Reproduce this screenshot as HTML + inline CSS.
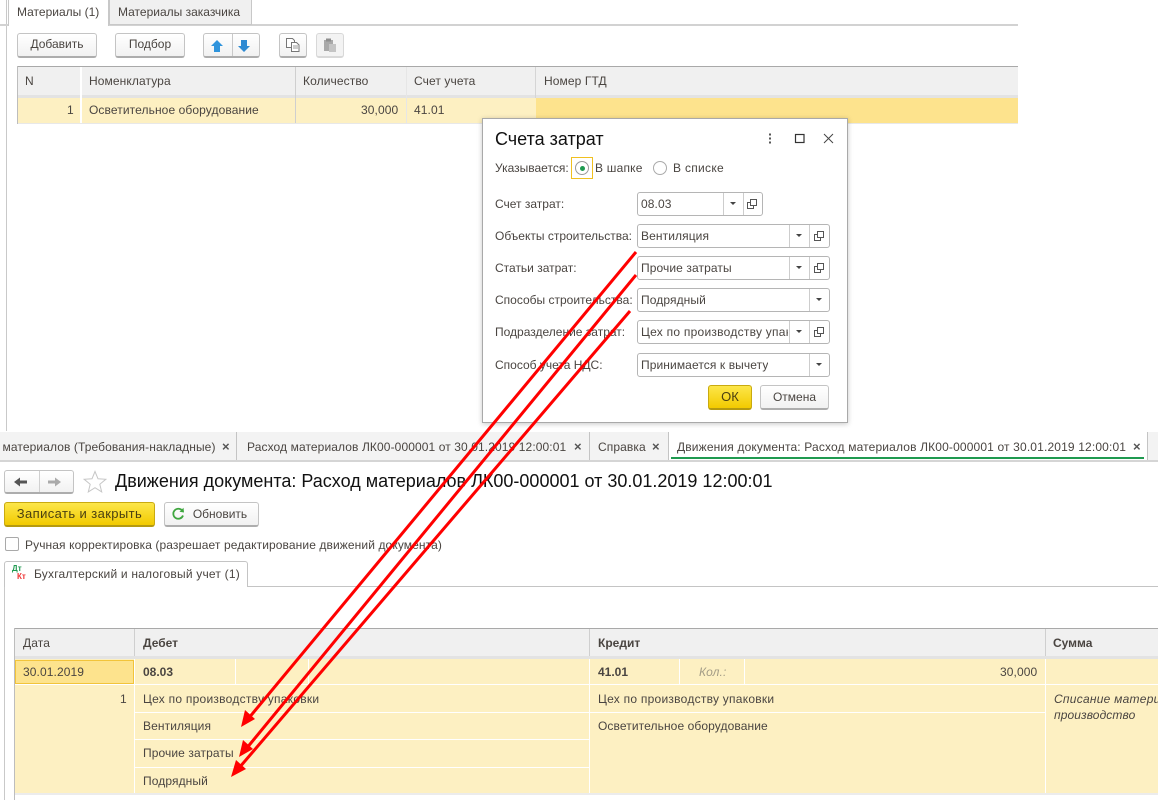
<!DOCTYPE html>
<html lang="ru"><head><meta charset="utf-8"><title>Счета затрат</title>
<style>
html,body{margin:0;padding:0;background:#fff}
#p{position:relative;width:1164px;height:800px;overflow:hidden;background:#fff;font:12px "Liberation Sans","Noto Sans CJK SC",sans-serif;color:#4a4541;filter:blur(.3px)}
#p div,#p span{position:absolute;box-sizing:border-box}
.t{white-space:nowrap;line-height:14px;letter-spacing:.1px}
.l{letter-spacing:0}
.w{letter-spacing:.25px}
.x{font-weight:bold;color:#555;font-size:13px}
.r{background:#fdf0c2}
.h{background:#f0f0f0}
.btn{background:linear-gradient(#fff,#f1f1f1);border:1px solid #c4c4c4;border-bottom:2px solid #adadad;border-radius:3px;text-align:center;line-height:20px;white-space:nowrap}
.y{background:linear-gradient(#fce64a,#f2ca00);border:1px solid #c9aa10;border-bottom:2px solid #b59a10;border-radius:3px;text-align:center;white-space:nowrap;color:#4a3f10}
.f{background:#fff;border:1px solid #b5b5b5;border-radius:3px;height:24px}
.v{left:3px;top:4px;line-height:14px;white-space:nowrap;overflow:hidden;letter-spacing:.1px}
.sep{top:0;bottom:0;width:1px;background:#cdcdcd}
.tri{width:0;height:0;border-left:3px solid transparent;border-right:3px solid transparent;border-top:3px solid #444}
</style></head><body><div id="p">

<!-- left edge frames -->
<div style="left:6px;top:0;width:1px;height:431px;background:#c9c9c9"></div>

<!-- top tabs -->
<div style="left:0;top:24px;width:1018px;height:2px;background:#d2d2d2"></div>
<div style="left:8px;top:-2px;width:101px;height:28px;background:#fff;border:1px solid #c8c8c8;border-top:0;border-bottom:0"></div>
<div style="left:109px;top:-2px;width:143px;height:27px;background:#f0f0f0;border:1px solid #c8c8c8"></div>
<span class="t l" style="left:17px;top:5px">Материалы (1)</span>
<span class="t l" style="left:118px;top:5px">Материалы заказчика</span>

<!-- toolbar -->
<div class="btn" style="left:17px;top:33px;width:80px;height:25px">Добавить</div>
<div class="btn" style="left:115px;top:33px;width:70px;height:25px">Подбор</div>
<div class="btn" style="left:203px;top:33px;width:57px;height:25px"></div>
<div style="left:232px;top:34px;width:1px;height:22px;background:#c9c9c9"></div>
<svg style="position:absolute;left:209px;top:39px" width="46" height="14" viewBox="0 0 46 14"><path d="M8 1 L14 7 H11 V13 H5 V7 H2 Z" fill="#2f94dc"/><path d="M32 1 H38 V7 H41 L35 13 L29 7 H32 Z" fill="#2f8ad2"/></svg>
<div class="btn" style="left:279px;top:33px;width:28px;height:25px"></div>
<svg style="position:absolute;left:285px;top:37px" width="16" height="16" viewBox="0 0 16 16" fill="#fff" stroke="#777"><path d="M1.500 1.500h6l2 2v7h-8z"/><path d="M6.500 5.500h5l2.500 2.500v6.500h-7.500z"/><path d="M8 9h5M8 11h5" stroke-width=".8"/></svg>
<div class="btn" style="left:316px;top:33px;width:28px;height:25px;background:#f3f3f3;border-color:#d8d8d8"></div>
<svg style="position:absolute;left:323px;top:38px" width="15" height="15" viewBox="0 0 15 15"><rect x="1" y="2" width="9" height="11" fill="#a9a9a9"/><rect x="3" y="0.500" width="5" height="3" fill="#8f8f8f"/><rect x="6" y="6" width="7" height="8" fill="#c4c4c4"/></svg>

<!-- top table -->
<div style="left:17px;top:66px;width:1001px;height:1px;background:#a9a9a9"></div>
<div style="left:17px;top:66px;width:1px;height:58px;background:#bdbdbd"></div>
<div class="h" style="left:18px;top:67px;width:1000px;height:28px"></div>
<div style="left:18px;top:95px;width:1000px;height:3px;background:#e3e3e3"></div>
<div class="r" style="left:18px;top:98px;width:518px;height:25px"></div>
<div style="left:536px;top:98px;width:482px;height:25px;background:#fde38d"></div>
<div style="left:18px;top:123px;width:1000px;height:1px;background:#e8e8e8"></div>
<div style="left:80px;top:67px;width:2px;height:56px;background:#fff"></div>
<div style="left:295px;top:67px;width:1px;height:56px;background:#cfcfcf"></div>
<div style="left:406px;top:67px;width:1px;height:56px;background:#e6e6e6"></div>
<div style="left:535px;top:67px;width:1px;height:31px;background:#d5d5d5"></div>
<span class="t" style="left:25px;top:74px">N</span>
<span class="t" style="left:89px;top:74px">Номенклатура</span>
<span class="t" style="left:303px;top:74px">Количество</span>
<span class="t" style="left:414px;top:74px">Счет учета</span>
<span class="t" style="left:544px;top:74px">Номер ГТД</span>
<span class="t" style="left:67px;top:103px">1</span>
<span class="t" style="left:89px;top:103px">Осветительное оборудование</span>
<span class="t" style="left:361px;top:103px">30,000</span>
<span class="t" style="left:414px;top:103px">41.01</span>

<!-- dialog -->
<div style="left:482px;top:118px;width:366px;height:305px;background:#fff;border:1px solid #a9a9a9;box-shadow:0 1px 5px rgba(0,0,0,.22)"></div>
<span class="t l" style="left:495px;top:129px;font-size:18px;line-height:20px;color:#111">Счета затрат</span>
<svg style="position:absolute;left:764px;top:131px" width="72" height="16" viewBox="0 0 72 16"><g fill="#555"><rect x="5" y="2.500" width="2" height="2"/><rect x="5" y="6.500" width="2" height="2"/><rect x="5" y="10.500" width="2" height="2"/></g><rect x="31.500" y="3.500" width="8.500" height="8" fill="none" stroke="#333" stroke-width="1.200"/><path d="M60 3l9 9M69 3l-9 9" stroke="#444" stroke-width="1" fill="none"/></svg>
<span class="t l" style="left:495px;top:161px">Указывается:</span>
<div style="left:571px;top:157px;width:22px;height:22px;border:1px solid #f0c020"></div>
<div style="left:575px;top:161px;width:14px;height:14px;border:1px solid #9a9a9a;border-radius:50%;background:#fff"></div>
<div style="left:580px;top:166px;width:5px;height:5px;border-radius:50%;background:#1f9a50"></div>
<span class="t" style="left:595px;top:161px;letter-spacing:.2px">В шапке</span>
<div style="left:653px;top:161px;width:14px;height:14px;border:1px solid #aaa;border-radius:50%;background:#fff"></div>
<span class="t" style="left:673px;top:161px;letter-spacing:.3px">В списке</span>

<span class="t l" style="left:495px;top:197px">Счет затрат:</span>
<span class="t l" style="left:495px;top:229px">Объекты строительства:</span>
<span class="t l" style="left:495px;top:261px">Статьи затрат:</span>
<span class="t l" style="left:495px;top:293px">Способы строительства:</span>
<span class="t l" style="left:495px;top:325px">Подразделение затрат:</span>
<span class="t l" style="left:495px;top:358px">Способ учета НДС:</span>

<div class="f" style="left:637px;top:192px;width:126px">
 <span class="v">08.03</span><div class="sep" style="left:85px"></div><div class="tri" style="left:92px;top:9px"></div><div class="sep" style="left:105px"></div>
 <svg style="position:absolute;left:109px;top:6px" width="10" height="10" viewBox="0 0 10 10" fill="none" stroke="#555"><path d="M3.500 .5h6v6h-6zM3.500 3.500h-3v6h6v-3"/></svg>
</div>
<div class="f" style="left:637px;top:224px;width:193px">
 <span class="v">Вентиляция</span><div class="sep" style="left:151px"></div><div class="tri" style="left:158px;top:9px"></div><div class="sep" style="left:171px"></div>
 <svg style="position:absolute;left:176px;top:6px" width="10" height="10" viewBox="0 0 10 10" fill="none" stroke="#555"><path d="M3.500 .5h6v6h-6zM3.500 3.500h-3v6h6v-3"/></svg>
</div>
<div class="f" style="left:637px;top:256px;width:193px">
 <span class="v">Прочие затраты</span><div class="sep" style="left:151px"></div><div class="tri" style="left:158px;top:9px"></div><div class="sep" style="left:171px"></div>
 <svg style="position:absolute;left:176px;top:6px" width="10" height="10" viewBox="0 0 10 10" fill="none" stroke="#555"><path d="M3.500 .5h6v6h-6zM3.500 3.500h-3v6h6v-3"/></svg>
</div>
<div class="f" style="left:637px;top:288px;width:193px">
 <span class="v">Подрядный</span><div class="sep" style="left:171px"></div><div class="tri" style="left:178px;top:9px"></div>
</div>
<div class="f" style="left:637px;top:320px;width:193px">
 <span class="v" style="width:147px;letter-spacing:.25px">Цех по производству упаковки</span><div class="sep" style="left:151px"></div><div class="tri" style="left:158px;top:9px"></div><div class="sep" style="left:171px"></div>
 <svg style="position:absolute;left:176px;top:6px" width="10" height="10" viewBox="0 0 10 10" fill="none" stroke="#555"><path d="M3.500 .5h6v6h-6zM3.500 3.500h-3v6h6v-3"/></svg>
</div>
<div class="f" style="left:637px;top:353px;width:193px">
 <span class="v">Принимается к вычету</span><div class="sep" style="left:171px"></div><div class="tri" style="left:178px;top:9px"></div>
</div>
<div class="y" style="left:708px;top:385px;width:44px;height:25px;line-height:22px;font-size:13px">ОК</div>
<div class="btn" style="left:760px;top:385px;width:69px;height:25px;line-height:22px">Отмена</div>

<!-- window tabs -->
<div style="left:0;top:432px;width:1164px;height:29px;background:#f3f3f3"></div>
<div style="left:0;top:460px;width:1164px;height:2px;background:#d5d5d5"></div>
<div style="left:236px;top:432px;width:1px;height:28px;background:#c4c4c4"></div>
<div style="left:589px;top:432px;width:1px;height:28px;background:#c4c4c4"></div>
<div style="left:668px;top:432px;width:1px;height:28px;background:#c4c4c4"></div>
<div style="left:669px;top:432px;width:478px;height:28px;background:#fff"></div>
<div style="left:1147px;top:432px;width:1px;height:28px;background:#c4c4c4"></div>
<div style="left:671px;top:457px;width:473px;height:2px;background:#1f9a50"></div>
<span class="t" style="left:-8px;top:440px">д материалов (Требования-накладные)</span>
<span class="t x" style="left:222px;top:440px">×</span>
<span class="t" style="left:247px;top:440px">Расход материалов ЛК00-000001 от 30.01.2019 12:00:01</span>
<span class="t x" style="left:574px;top:440px">×</span>
<span class="t" style="left:598px;top:440px">Справка</span>
<span class="t x" style="left:652px;top:440px">×</span>
<span class="t" style="left:677px;top:440px;letter-spacing:.15px">Движения документа: Расход материалов ЛК00-000001 от 30.01.2019 12:00:01</span>
<span class="t x" style="left:1133px;top:440px">×</span>

<!-- document header -->
<div class="btn" style="left:4px;top:470px;width:70px;height:24px"></div>
<div style="left:39px;top:471px;width:1px;height:21px;background:#d0d0d0"></div>
<svg style="position:absolute;left:14px;top:476px" width="52" height="12" viewBox="0 0 52 12"><path d="M0 6 L6 1.500 V4.500 H13 V7.500 H6 V10.500 Z" fill="#555"/><path d="M47 6 L41 1.500 V4.500 H34 V7.500 H41 V10.500 Z" fill="#aaa"/></svg>
<svg style="position:absolute;left:83px;top:470px" width="24" height="23" viewBox="0 0 24 23"><path d="M12 1.500 L15 8.800 L22.800 9.300 L16.800 14.300 L18.700 21.900 L12 17.700 L5.300 21.900 L7.200 14.300 L1.200 9.300 L9 8.800 Z" fill="#fff" stroke="#c6c6c6"/></svg>
<span class="t l" style="left:115px;top:471px;font-size:18px;line-height:20px;color:#111">Движения документа: Расход материалов ЛК00-000001 от 30.01.2019 12:00:01</span>

<div class="y" style="left:4px;top:502px;width:151px;height:25px;line-height:22px;font-size:13px;letter-spacing:.4px">Записать и закрыть</div>
<div class="btn" style="left:164px;top:502px;width:95px;height:25px;line-height:22px;padding-left:17px">Обновить</div>
<svg style="position:absolute;left:171px;top:507px" width="14" height="14" viewBox="0 0 14 14" fill="none"><path d="M11.500 4 A5 5 0 1 0 12 8.500" stroke="#3fa63f" stroke-width="1.800"/><path d="M8.500 4.800 L13 5.500 L12.500 .8 Z" fill="#3fa63f"/></svg>
<div style="left:5px;top:537px;width:14px;height:14px;background:#fff;border:1px solid #a9a9a9;border-radius:2px"></div>
<span class="t" style="left:25px;top:538px">Ручная корректировка (разрешает редактирование движений документа)</span>

<!-- lower tab -->
<div style="left:4px;top:586px;width:1154px;height:1px;background:#c4c4c4"></div>
<div style="left:4px;top:561px;width:244px;height:26px;background:#fff;border:1px solid #c4c4c4;border-bottom:0;border-radius:3px 3px 0 0"></div>
<span class="t l" style="left:12px;top:564px;font-size:8px;font-weight:bold;color:#1f9a50;line-height:9px">Дт</span>
<span class="t l" style="left:17px;top:572px;font-size:8px;font-weight:bold;color:#e33;line-height:9px">Кт</span>
<span class="t" style="left:34px;top:567px;letter-spacing:.2px">Бухгалтерский и налоговый учет (1)</span>
<div style="left:4px;top:587px;width:1px;height:213px;background:#c9c9c9"></div>

<!-- lower table -->
<div style="left:14px;top:628px;width:1150px;height:1px;background:#a9a9a9"></div>
<div style="left:14px;top:628px;width:1px;height:172px;background:#bdbdbd"></div>
<div class="h" style="left:15px;top:629px;width:1149px;height:27px"></div>
<div style="left:15px;top:656px;width:1149px;height:3px;background:#e3e3e3"></div>
<div class="r" style="left:15px;top:659px;width:1149px;height:134px"></div>
<div style="left:15px;top:793px;width:1149px;height:2px;background:#ececec"></div>
<div style="left:134px;top:629px;width:1px;height:27px;background:#cfcfcf"></div>
<div style="left:589px;top:629px;width:1px;height:27px;background:#cfcfcf"></div>
<div style="left:1045px;top:629px;width:1px;height:27px;background:#cfcfcf"></div>
<div style="left:134px;top:659px;width:1px;height:134px;background:#fff"></div>
<div style="left:589px;top:659px;width:1px;height:134px;background:#fff"></div>
<div style="left:1045px;top:659px;width:1px;height:134px;background:#fff"></div>
<div style="left:235px;top:659px;width:1px;height:25px;background:#fff"></div>
<div style="left:308px;top:659px;width:1px;height:25px;background:#fff"></div>
<div style="left:679px;top:659px;width:1px;height:25px;background:#fff"></div>
<div style="left:744px;top:659px;width:1px;height:25px;background:#fff"></div>
<div style="left:15px;top:684px;width:1149px;height:1px;background:#fff"></div>
<div style="left:135px;top:712px;width:910px;height:1px;background:#fff"></div>
<div style="left:135px;top:739px;width:454px;height:1px;background:#fff"></div>
<div style="left:135px;top:767px;width:454px;height:1px;background:#fff"></div>
<div style="left:15px;top:660px;width:119px;height:24px;background:#fde38d;border:1px solid #f2c43a"></div>

<span class="t" style="left:23px;top:636px">Дата</span>
<span class="t l" style="left:143px;top:636px;font-weight:bold">Дебет</span>
<span class="t l" style="left:598px;top:636px;font-weight:bold">Кредит</span>
<span class="t l" style="left:1053px;top:636px;font-weight:bold">Сумма</span>
<span class="t" style="left:23px;top:665px">30.01.2019</span>
<span class="t l" style="left:143px;top:665px;font-weight:bold">08.03</span>
<span class="t l" style="left:598px;top:665px;font-weight:bold">41.01</span>
<span class="t" style="left:699px;top:665px;font-style:italic;color:#a39c86">Кол.:</span>
<span class="t" style="left:1000px;top:665px">30,000</span>
<span class="t" style="left:120px;top:692px">1</span>
<span class="t w" style="left:143px;top:692px">Цех по производству упаковки</span>
<span class="t w" style="left:598px;top:692px">Цех по производству упаковки</span>
<span class="t" style="left:143px;top:719px">Вентиляция</span>
<span class="t" style="left:598px;top:719px">Осветительное оборудование</span>
<span class="t" style="left:143px;top:746px">Прочие затраты</span>
<span class="t" style="left:143px;top:774px">Подрядный</span>
<span class="t" style="left:1054px;top:692px;font-style:italic;letter-spacing:.25px">Списание материалов в</span>
<span class="t" style="left:1054px;top:708px;font-style:italic">производство</span>

<!-- the screenshot ends at x=1158 -->
<div style="left:1158px;top:426px;width:6px;height:374px;background:#fff"></div>

<!-- red arrows -->
<svg style="position:absolute;left:0;top:0" width="1164" height="800" viewBox="0 0 1164 800">
<g stroke="#ff0000" stroke-width="3" fill="none">
<path d="M636 252 L248 719"/>
<path d="M636 275 L246 749"/>
<path d="M630 311 L239 768"/>
</g>
<g fill="#ff0000">
<path d="M241 727 L245 710 L255 719 Z"/>
<path d="M239 757 L243 740 L253 749 Z"/>
<path d="M231 777 L236 760 L246 769 Z"/>
</g>
</svg>
</div></body></html>
